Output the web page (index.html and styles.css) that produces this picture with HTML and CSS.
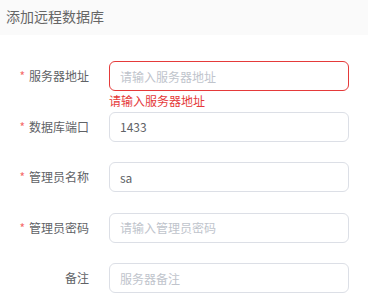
FILE: index.html
```html
<!DOCTYPE html>
<html lang="zh-CN">
<head>
    <meta charset="UTF-8">
    <meta name="viewport" content="width=device-width, initial-scale=1.0">
    <title>添加远程数据库</title>
    <link rel="stylesheet" href="styles.css">
</head>
<body>
    <div class="dialog">
        <div class="dialog-header">添加远程数据库</div>

        <form class="db-form">
            <div class="form-item is-required is-error">
                <label class="form-label" for="host">服务器地址</label>
                <div class="form-content">
                    <input class="form-input" type="text" id="host" placeholder="请输入服务器地址">
                    <div class="form-error">请输入服务器地址</div>
                </div>
            </div>
            <div class="form-item is-required">
                <label class="form-label" for="port">数据库端口</label>
                <div class="form-content">
                    <input class="form-input" type="text" id="port" value="1433">
                </div>
            </div>
            <div class="form-item is-required">
                <label class="form-label" for="user">管理员名称</label>
                <div class="form-content">
                    <input class="form-input" type="text" id="user" value="sa">
                </div>
            </div>
            <div class="form-item is-required">
                <label class="form-label" for="pwd">管理员密码</label>
                <div class="form-content">
                    <input class="form-input" type="text" id="pwd" placeholder="请输入管理员密码">
                </div>
            </div>
            <div class="form-item">
                <label class="form-label" for="note">备注</label>
                <div class="form-content">
                    <input class="form-input" type="text" id="note" placeholder="服务器备注">
                </div>
            </div>
        </form>
    </div>
</body>
</html>
```

FILE: styles.css
```css
body {
    margin: 0;
    padding: 0;
    background-color: #fff;
    font-family: "Noto Sans CJK SC", sans-serif;
    color: #606266;
}
.dialog-header {
    height: 35px;
    line-height: 33px;
    padding-left: 6px;
    background-color: #fafafa;
    font-size: 14px;
    color: #666;
}
.db-form {
    padding-top: 26px;
}
.form-item {
    display: flex;
    align-items: center;
    margin-bottom: 20.5px;
}
.form-label {
    width: 89px;
    margin-right: 20px;
    text-align: right;
    font-size: 12px;
    color: #606266;
    line-height: 30px;
}
.is-required .form-label::before {
    content: "*";
    color: #f56c6c;
    margin-right: 4px;
}
.form-content {
    position: relative;
    width: 240px;
}
.form-input {
    display: block;
    width: 100%;
    height: 30px;
    box-sizing: border-box;
    padding: 0 10px;
    border: 1px solid #dcdfe6;
    border-radius: 6px;
    font-family: inherit;
    font-size: 12px;
    color: #606266;
    outline: none;
}
.form-input::placeholder {
    color: #c0c4cc;
}
.is-error .form-input {
    border-color: #e53a3a;
}
.form-error {
    position: absolute;
    top: 100%;
    left: 0;
    padding-top: 4px;
    font-size: 12px;
    line-height: 1;
    color: #e53a3a;
}
```
